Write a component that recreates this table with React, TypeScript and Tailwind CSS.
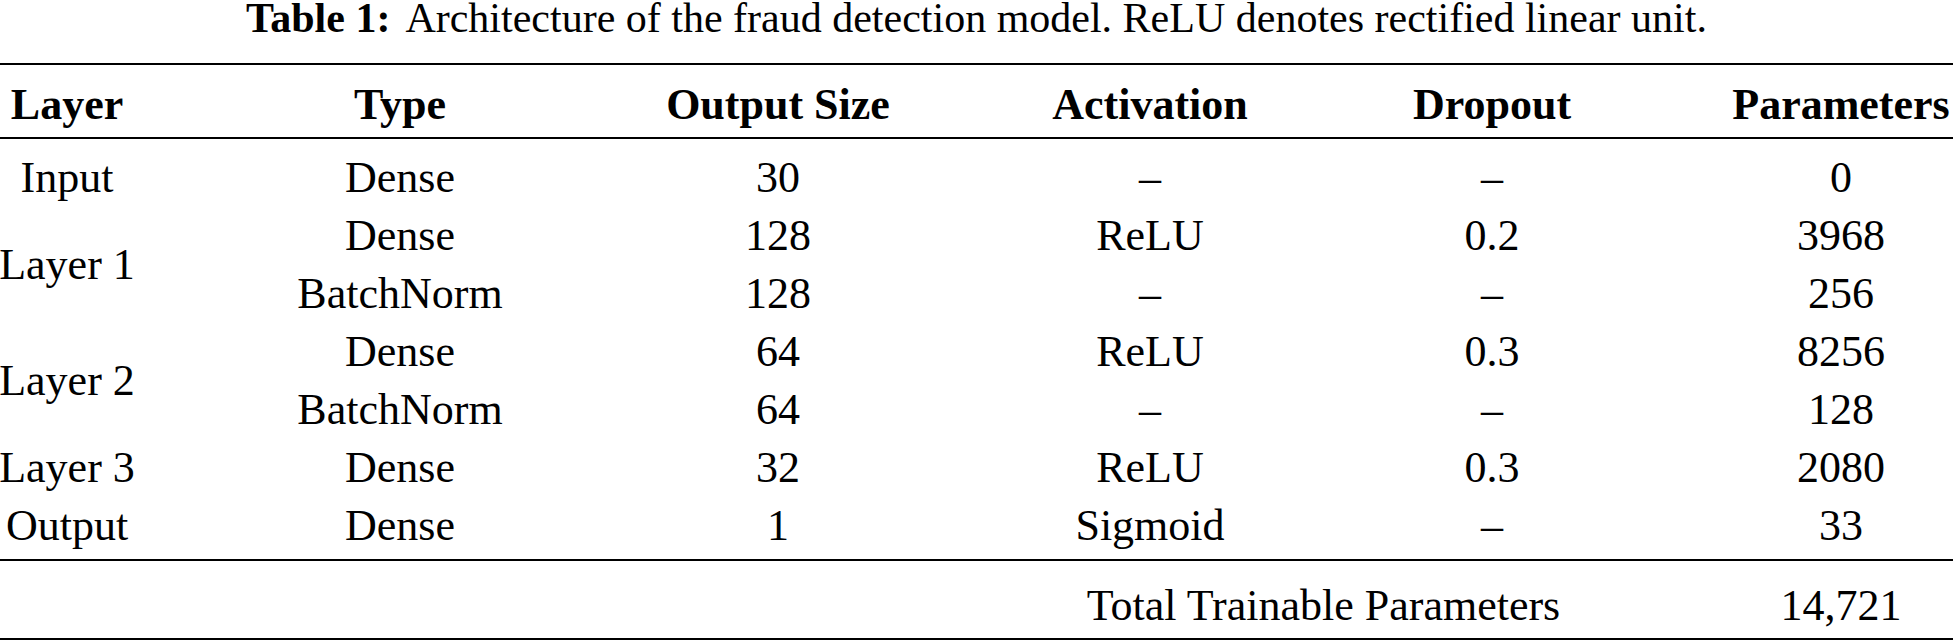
const cols = "grid grid-cols-[532px_224px_520px_164px_155px_224px]";
const headCols = "grid grid-cols-[134px_532px_224px_520px_164px_155px_224px]";

type Row = { type: string; size: string; act: string; drop: string; params: string };

const groups: { label: string; rows: Row[] }[] = [
  { label: "Input", rows: [{ type: "Dense", size: "30", act: "–", drop: "–", params: "0" }] },
  {
    label: "Layer 1",
    rows: [
      { type: "Dense", size: "128", act: "ReLU", drop: "0.2", params: "3968" },
      { type: "BatchNorm", size: "128", act: "–", drop: "–", params: "256" },
    ],
  },
  {
    label: "Layer 2",
    rows: [
      { type: "Dense", size: "64", act: "ReLU", drop: "0.3", params: "8256" },
      { type: "BatchNorm", size: "64", act: "–", drop: "–", params: "128" },
    ],
  },
  { label: "Layer 3", rows: [{ type: "Dense", size: "32", act: "ReLU", drop: "0.3", params: "2080" }] },
  { label: "Output", rows: [{ type: "Dense", size: "1", act: "Sigmoid", drop: "–", params: "33" }] },
];

function Cell({ children, className = "" }: { children?: React.ReactNode; className?: string }) {
  return <div className={"flex justify-center whitespace-nowrap " + className}>{children}</div>;
}

export default function App() {
  return (
    <div className="w-[1953px] h-[643px] bg-white text-black font-['Liberation_Serif',serif] overflow-hidden">
      <div className="text-center text-[42px] leading-[36px] whitespace-nowrap">
        <span className="font-bold">Table 1:</span>
        <span className="ml-[15px]">Architecture of the fraud detection model. ReLU denotes rectified linear unit.</span>
      </div>

      <div className="mt-[27px] border-t-2 border-black" />

      {/* header */}
      <div className={headCols + " pt-[11px] pb-[3px] text-[44px] leading-[58px] font-bold border-b-2 border-black"}>
        <Cell>Layer</Cell>
        <Cell>Type</Cell>
        <Cell>Output Size</Cell>
        <Cell>Activation</Cell>
        <Cell>Dropout</Cell>
        <div />
        <Cell>Parameters</Cell>
      </div>

      {/* body */}
      <div className="flex pt-[10px] pb-[4px] text-[44px] leading-[58px] border-b-2 border-black">
        <div className="w-[134px] flex flex-col">
          {groups.map((g) => (
            <Cell key={g.label} className={g.rows.length === 2 ? "h-[116px] items-center" : "h-[58px]"}>
              {g.label}
            </Cell>
          ))}
        </div>
        <div className="flex-1 flex flex-col">
          {groups.flatMap((g) =>
            g.rows.map((r, i) => (
              <div key={g.label + i} className={cols + " h-[58px]"}>
                <Cell>{r.type}</Cell>
                <Cell>{r.size}</Cell>
                <Cell>{r.act}</Cell>
                <Cell>{r.drop}</Cell>
                <div />
                <Cell>{r.params}</Cell>
              </div>
            ))
          )}
        </div>
      </div>

      {/* total */}
      <div className={headCols + " pt-[16px] pb-[3px] text-[44px] leading-[58px] border-b-2 border-black"}>
        <Cell className="col-start-4 col-span-3 pl-[28px]">Total Trainable Parameters</Cell>
        <Cell className="col-start-7">14,721</Cell>
      </div>
    </div>
  );
}
